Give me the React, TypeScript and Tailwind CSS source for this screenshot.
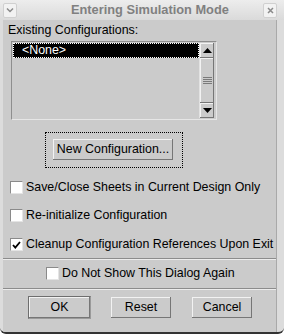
import React from 'react';

const raised = 'shadow-[inset_-1px_-1px_#767676,inset_1px_1px_#f2f2f2]';

const CheckBox = ({ checked }: { checked?: boolean }) => (
  <div className="w-[13px] h-[13px] bg-white border border-t-[#8a8a8a] border-l-[#8a8a8a] border-b-[#e4e4e4] border-r-[#e4e4e4] flex items-center justify-center shrink-0">
    {checked && (
      <svg width="9" height="8" viewBox="0 0 9 8">
        <path d="M1 4 L3.3 6.6 L8 1" stroke="#000" strokeWidth="1.8" fill="none" />
      </svg>
    )}
  </div>
);

const Option = ({ label, checked, className }: { label: string; checked?: boolean; className?: string }) => (
  <div className={`flex items-center h-[13px] gap-[3px] ${className ?? ''}`}>
    <CheckBox checked={checked} />
    <span className="leading-[13px] whitespace-nowrap">{label}</span>
  </div>
);

const Separator = ({ className }: { className?: string }) => (
  <div className={`border-t border-[#8c8c8c] border-b border-b-[#ececec] ${className ?? ''}`} />
);

const PushButton = ({ label, className }: { label: string; className?: string }) => (
  <div className={`h-[21px] bg-[#cbcbcb] flex items-center justify-center leading-none ${raised} ${className ?? ''}`}>
    {label}
  </div>
);

const App = () => {
  return (
    <div className="w-[284px] h-[334px] bg-[#dcdcdc] rounded-b-[6px] border-b-2 border-[#333] flex flex-col overflow-hidden text-black text-[12.4px] font-['Liberation_Sans',Arial,sans-serif]">
      {/* title bar */}
      <div className="h-[20px] shrink-0 flex items-center bg-gradient-to-b from-[#ededed] to-[#dadada]">
        <div className="ml-[3px] w-[14px] h-[15px] rounded-[2px] bg-[#f2f2f2] border border-[#d0d0d0] flex items-center justify-center">
          <svg width="8" height="6" viewBox="0 0 8 6">
            <path d="M1 1.5 L4 4.5 L7 1.5" stroke="#8a8a8a" strokeWidth="1.5" fill="none" />
          </svg>
        </div>
        <span className="ml-[54px] text-[12.8px] font-bold text-[#808080] leading-none">Entering Simulation Mode</span>
        <div className="ml-auto mr-[7px] w-[14px] h-[15px] rounded-[2px] bg-[#f2f2f2] border border-[#d0d0d0] flex items-center justify-center">
          <svg width="7" height="7" viewBox="0 0 7 7">
            <path d="M1 1 L6 6 M6 1 L1 6" stroke="#8a8a8a" strokeWidth="1.5" fill="none" />
          </svg>
        </div>
      </div>

      {/* body */}
      <div className="flex-1 ml-[3px] mr-[7px] bg-[#cbcbcb] border-r border-[#a9a9a9] flex flex-col">
        <div className="mt-[3px] pl-[5px] leading-[14px]">Existing Configurations:</div>

        <div className="mt-[4px] ml-[8px] w-[206px] h-[79px] border border-t-[#8e8e8e] border-l-[#8e8e8e] border-b-[#e6e6e6] border-r-[#e6e6e6] p-[1px] flex">
          <div className="w-[186px] h-[15px] bg-black border border-dotted border-white text-white leading-[13px] pl-[8px]">
            &lt;None&gt;
          </div>
          <div className="w-[15px] h-[75px] flex flex-col border-l border-[#e2e2e2]">
            <div className={`h-[15px] flex items-center justify-center ${raised}`}>
              <svg width="9" height="5" viewBox="0 0 9 5">
                <path d="M4.5 0 L9 5 L0 5 Z" fill="#000" />
              </svg>
            </div>
            <div className={`flex-1 flex flex-col items-center justify-center gap-[1px] ${raised}`}>
              <div className="w-[9px] h-[1px] bg-[#7a7a7a]" />
              <div className="w-[9px] h-[1px] bg-[#7a7a7a]" />
              <div className="w-[9px] h-[1px] bg-[#7a7a7a]" />
              <div className="w-[9px] h-[1px] bg-[#7a7a7a]" />
            </div>
            <div className={`h-[15px] flex items-center justify-center ${raised}`}>
              <svg width="9" height="5" viewBox="0 0 9 5">
                <path d="M0 0 L9 0 L4.5 5 Z" fill="#000" />
              </svg>
            </div>
          </div>
        </div>

        <div className="mt-[12px] ml-[42px] w-[138px] h-[36px] border border-dotted border-black">
          <PushButton label="New Configuration..." className="ml-[7px] mt-[6px] w-[120px]" />
        </div>

        <Option className="mt-[13px] ml-[7px]" label="Save/Close Sheets in Current Design Only" />
        <Option className="mt-[15px] ml-[7px]" label="Re-initialize Configuration" />
        <Option className="mt-[16px] ml-[7px]" label="Cleanup Configuration References Upon Exit" checked />

        <Separator className="mt-[7px]" />
        <Option className="mt-[7px] ml-[43px]" label="Do Not Show This Dialog Again" />
        <Separator className="mt-[8px]" />

        <div className="mt-[6px] pl-[25px] flex items-center gap-[20px]">
          <div className="w-[63px] h-[23px] border border-[#6e6e6e] border-b-[#9a9a9a] border-r-[#9a9a9a] flex">
            <PushButton label="OK" className="flex-1" />
          </div>
          <PushButton label="Reset" className="w-[60px]" />
          <PushButton label="Cancel" className="w-[60px] ml-[1px]" />
        </div>
      </div>
    </div>
  );
};

export default App;
